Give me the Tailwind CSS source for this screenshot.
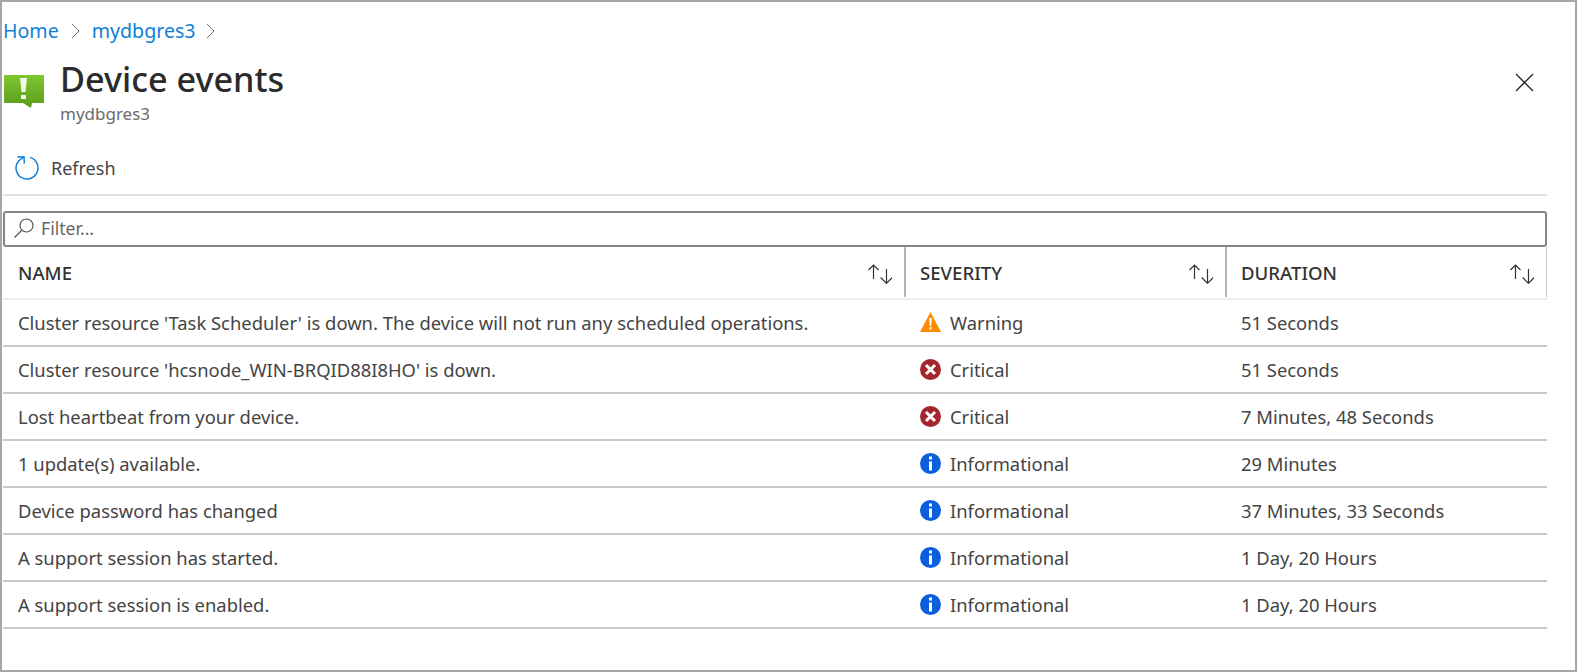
<!DOCTYPE html>
<html lang="en">
<head>
  <meta charset="UTF-8" />
  <title>Device events</title>
  <script src="https://cdn.jsdelivr.net/npm/@tailwindcss/browser@4"></script>
</head>
<body class="bg-white">
  <div class="w-[1577px] h-[672px] overflow-hidden border-2 border-[#a6a6a6] font-['Noto_Sans',sans-serif] text-[18.4px] text-[#444]">
    <!-- Breadcrumb -->
    <nav class="flex items-center h-[24px] mt-[17px] pl-[1px] text-[19.6px] text-[#0f7fd6]">
      <span>Home</span>
      <svg class="w-[12px] h-[16px] ml-[11px]" viewBox="0 0 12 16" fill="none" stroke="#707070" stroke-width="1"><path d="M2 1l7 7-7 7" /></svg>
      <span class="ml-[10px]">mydbgres3</span>
      <svg class="w-[12px] h-[16px] ml-[9px]" viewBox="0 0 12 16" fill="none" stroke="#707070" stroke-width="1"><path d="M2 1l7 7-7 7" /></svg>
    </nav>

    <!-- Title -->
    <header class="flex h-[70px] mt-[16px] relative">
      <svg class="w-[40px] h-[33px] ml-[2px] mt-[16px] shrink-0" viewBox="0 0 40 33">
        <defs>
          <linearGradient id="green" x1="0" y1="0" x2="0" y2="1">
            <stop offset="0" stop-color="#7fc82f" />
            <stop offset="1" stop-color="#5a9a1c" />
          </linearGradient>
        </defs>
        <path d="M1 0h38a1 1 0 0 1 1 1v27H28l-1 5-8-5H1a1 1 0 0 1-1-1V1a1 1 0 0 1 1-1z" fill="url(#green)" />
        <path d="M16 3h7l-1.500 14h-4z M17 20h5v4h-5z" fill="#f2f8e6" />
      </svg>
      <div class="ml-[16px]">
        <h1 class="text-[34.200px] leading-[40px] font-medium text-[#2b2b2b]">Device events</h1>
        <p class="text-[17px] leading-[22px] mt-[4px] text-[#6b6b6b]">mydbgres3</p>
      </div>
      <svg class="absolute right-[41px] top-[14px] w-[19px] h-[19px]" viewBox="0 0 19 19" stroke="#222" stroke-width="1.300"><path d="M1 1l17 17M18 1L1 18" /></svg>
    </header>

    <!-- Toolbar -->
    <div class="flex items-center h-[46px] mt-[21px] ml-[1px] mr-[28px] pl-[12px] pb-[7px] border-b-2 border-[#e0e0e0]">
      <svg class="w-[25px] h-[25px]" viewBox="0 0 25 25" fill="none" stroke="#0f7fd6" stroke-width="1.500">
        <path d="M15 1.400A11 11 0 1 1 3.500 5L9 1" />
        <path d="M2.500 1L9 .8l.3 6.700" />
      </svg>
      <span class="ml-[11px] text-[18px]">Refresh</span>
    </div>

    <!-- Filter -->
    <div class="flex items-center h-[36px] mt-[15px] ml-[1px] mr-[28px] pl-[8px] pb-[2px] border-2 border-[#858585] rounded-[3px] text-[17.6px] text-[#666]">
      <svg class="w-[22px] h-[22px]" viewBox="0 0 22 22" fill="none" stroke="#555" stroke-width="1.200"><circle cx="13.500" cy="8.500" r="6.500" /><path d="M9 13l-7.500 7.500" /></svg>
      <span class="ml-[6px]">Filter...</span>
    </div>

    <!-- Events table -->
    <div class="ml-[1px] mr-[28px]">
      <div class="grid grid-cols-[903px_321px_320px] h-[53px] items-stretch border-b-2 border-[#ececec] font-medium text-[18.6px] text-[#333]">
        <div class="flex items-center justify-between pl-[15px] pr-[12px] pt-[1px] border-r-2 border-[#b3b3b3] mb-[1px]">
          <span>NAME</span>
          <svg class="w-[24px] h-[20px] mt-[2px]" viewBox="0 0 24 20" fill="none" stroke="#333" stroke-width="1.200"><path d="M5.500 15V1M.5 6l5-5 5 5M18.500 5v14M12.700 13.500l5.800 5.800 5.800-5.800" /></svg>
        </div>
        <div class="flex items-center justify-between pl-[14px] pr-[12px] pt-[1px] border-r-2 border-[#b3b3b3] mb-[1px]">
          <span>SEVERITY</span>
          <svg class="w-[24px] h-[20px] mt-[2px]" viewBox="0 0 24 20" fill="none" stroke="#333" stroke-width="1.200"><path d="M5.500 15V1M.5 6l5-5 5 5M18.500 5v14M12.700 13.500l5.800 5.800 5.800-5.800" /></svg>
        </div>
        <div class="flex items-center justify-between pl-[14px] pr-[12px] pt-[1px] border-r border-[#c8c8c8] mb-[1px]">
          <span>DURATION</span>
          <svg class="w-[24px] h-[20px] mt-[2px]" viewBox="0 0 24 20" fill="none" stroke="#333" stroke-width="1.200"><path d="M5.500 15V1M.5 6l5-5 5 5M18.500 5v14M12.700 13.500l5.800 5.800 5.800-5.800" /></svg>
        </div>
      </div>

      <div class="grid grid-cols-[903px_321px_320px] h-[47px] items-center border-b-2 border-[#c8c8c8]">
        <div class="pl-[15px]">Cluster resource 'Task Scheduler' is down. The device will not run any scheduled operations.</div>
        <div class="flex items-center pl-[14px]">
          <svg class="w-[21px] h-[21px]" viewBox="0 0 21 21"><path d="M10.500 0L21 20H0z" fill="#ff8c00" /><path d="M9.300 6h2.400l-.4 8H9.700zM9.400 15.200h2.200v2.300H9.400z" fill="#fff" /></svg>
          <span class="ml-[9px]">Warning</span>
        </div>
        <div class="pl-[14px]">51 Seconds</div>
      </div>

      <div class="grid grid-cols-[903px_321px_320px] h-[47px] items-center border-b-2 border-[#c8c8c8]">
        <div class="pl-[15px]">Cluster resource 'hcsnode_WIN-BRQID88I8HO' is down.</div>
        <div class="flex items-center pl-[14px]">
          <svg class="w-[21px] h-[21px]" viewBox="0 0 21 21"><circle cx="10.500" cy="10.500" r="10.500" fill="#a4262c" /><path d="M6 6l9 9M15 6l-9 9" stroke="#fff" stroke-width="3" /></svg>
          <span class="ml-[9px]">Critical</span>
        </div>
        <div class="pl-[14px]">51 Seconds</div>
      </div>

      <div class="grid grid-cols-[903px_321px_320px] h-[47px] items-center border-b-2 border-[#c8c8c8]">
        <div class="pl-[15px]">Lost heartbeat from your device.</div>
        <div class="flex items-center pl-[14px]">
          <svg class="w-[21px] h-[21px]" viewBox="0 0 21 21"><circle cx="10.500" cy="10.500" r="10.500" fill="#a4262c" /><path d="M6 6l9 9M15 6l-9 9" stroke="#fff" stroke-width="3" /></svg>
          <span class="ml-[9px]">Critical</span>
        </div>
        <div class="pl-[14px]">7 Minutes, 48 Seconds</div>
      </div>

      <div class="grid grid-cols-[903px_321px_320px] h-[47px] items-center border-b-2 border-[#c8c8c8]">
        <div class="pl-[15px]">1 update(s) available.</div>
        <div class="flex items-center pl-[14px]">
          <svg class="w-[21px] h-[21px]" viewBox="0 0 21 21"><circle cx="10.500" cy="10.500" r="10.500" fill="#0b5fdc" /><path d="M9 3.500h3v3H9zM9 8.500h3V17.500H9z" fill="#fff" /></svg>
          <span class="ml-[9px]">Informational</span>
        </div>
        <div class="pl-[14px]">29 Minutes</div>
      </div>

      <div class="grid grid-cols-[903px_321px_320px] h-[47px] items-center border-b-2 border-[#c8c8c8]">
        <div class="pl-[15px]">Device password has changed</div>
        <div class="flex items-center pl-[14px]">
          <svg class="w-[21px] h-[21px]" viewBox="0 0 21 21"><circle cx="10.500" cy="10.500" r="10.500" fill="#0b5fdc" /><path d="M9 3.500h3v3H9zM9 8.500h3V17.500H9z" fill="#fff" /></svg>
          <span class="ml-[9px]">Informational</span>
        </div>
        <div class="pl-[14px]">37 Minutes, 33 Seconds</div>
      </div>

      <div class="grid grid-cols-[903px_321px_320px] h-[47px] items-center border-b-2 border-[#c8c8c8]">
        <div class="pl-[15px]">A support session has started.</div>
        <div class="flex items-center pl-[14px]">
          <svg class="w-[21px] h-[21px]" viewBox="0 0 21 21"><circle cx="10.500" cy="10.500" r="10.500" fill="#0b5fdc" /><path d="M9 3.500h3v3H9zM9 8.500h3V17.500H9z" fill="#fff" /></svg>
          <span class="ml-[9px]">Informational</span>
        </div>
        <div class="pl-[14px]">1 Day, 20 Hours</div>
      </div>

      <div class="grid grid-cols-[903px_321px_320px] h-[47px] items-center border-b-2 border-[#c8c8c8]">
        <div class="pl-[15px]">A support session is enabled.</div>
        <div class="flex items-center pl-[14px]">
          <svg class="w-[21px] h-[21px]" viewBox="0 0 21 21"><circle cx="10.500" cy="10.500" r="10.500" fill="#0b5fdc" /><path d="M9 3.500h3v3H9zM9 8.500h3V17.500H9z" fill="#fff" /></svg>
          <span class="ml-[9px]">Informational</span>
        </div>
        <div class="pl-[14px]">1 Day, 20 Hours</div>
      </div>
    </div>
  </div>
</body>
</html>
